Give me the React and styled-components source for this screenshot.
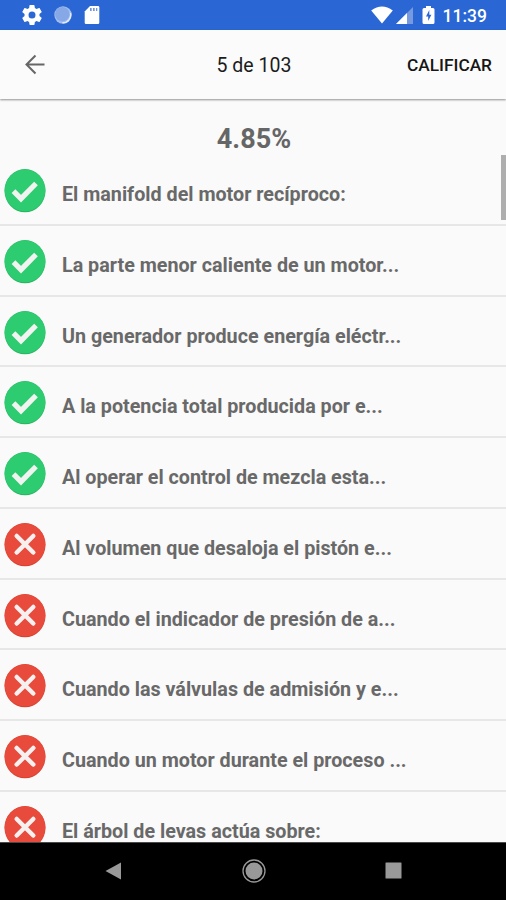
import React from 'react';
import styled, { createGlobalStyle } from 'styled-components';

const questions = [
    { text: 'El manifold del motor recíproco:', correct: true },
    { text: 'La parte menor caliente de un motor...', correct: true },
    { text: 'Un generador produce energía eléctr...', correct: true },
    { text: 'A la potencia total producida por e...', correct: true },
    { text: 'Al operar el control de mezcla esta...', correct: true },
    { text: 'Al volumen que desaloja el pistón e...', correct: false },
    { text: 'Cuando el indicador de presión de a...', correct: false },
    { text: 'Cuando las válvulas de admisión y e...', correct: false },
    { text: 'Cuando un motor durante el proceso ...', correct: false },
    { text: 'El árbol de levas actúa sobre:', correct: false },
];

const GlobalStyle = createGlobalStyle`
    body {
        margin: 0;
        background: #fafafa;
        font-family: Roboto, sans-serif;
    }
    * {
        box-sizing: border-box;
    }
`;

const Screen = styled.div`
    width: 506px;
    height: 900px;
    display: flex;
    flex-direction: column;
    overflow: hidden;
    background: #fafafa;
`;

const StatusBar = styled.div`
    flex: none;
    height: 30px;
    padding: 0 19px 0 22px;
    display: flex;
    align-items: center;
    justify-content: space-between;
    background: #2a66d4;
    color: white;
`;

const StatusGroup = styled.div`
    display: flex;
    align-items: center;
    gap: ${(props) => props.gap};
`;

const Clock = styled.span`
    margin: 2px 0 0 4px;
    font-size: 17.5px;
    font-weight: 500;
    line-height: 28px;
    white-space: nowrap;
`;

const Header = styled.header`
    flex: none;
    height: 69px;
    display: grid;
    grid-template-columns: 1fr auto 1fr;
    align-items: center;
    padding: 0 14px 0 24px;
    background: #fbfbfb;
    box-shadow: 0 1px 2px rgba(0, 0, 0, 0.42);
    z-index: 1;
`;

const BackButton = styled.button`
    width: 22px;
    height: 22px;
    padding: 0;
    border: 0;
    background: none;
    display: flex;
`;

const Counter = styled.h1`
    margin: 2px 8px 0 0;
    font-size: 19.5px;
    font-weight: 400;
    line-height: 24px;
    color: #1c1c1c;
`;

const GradeButton = styled.button`
    justify-self: end;
    padding: 0;
    border: 0;
    background: none;
    font-family: inherit;
    font-size: 17.3px;
    font-weight: 500;
    line-height: 24px;
    color: #161616;
`;

const Score = styled.div`
    flex: none;
    height: 55px;
    padding: 24px 0 0 2px;
    text-align: center;
    font-size: 27px;
    font-weight: 700;
    line-height: 32px;
    color: #666;
`;

const ListArea = styled.div`
    flex: 1;
    min-height: 0;
    position: relative;
    overflow: hidden;
`;

const Rows = styled.div`
    padding-top: 1px;
`;

const Row = styled.div`
    height: 70.75px;
    display: flex;
    align-items: flex-start;
    padding: 14px 0 0 4px;
    border-bottom: 2px solid #e7e7e7;
`;

const Question = styled.p`
    margin: 14px 0 0 16px;
    font-size: 19.73px;
    font-weight: 700;
    line-height: 24px;
    white-space: nowrap;
    color: #696969;
`;

const ScrollThumb = styled.div`
    position: absolute;
    top: 1px;
    right: 0;
    width: 5px;
    height: 65px;
    background: #aeaeae;
`;

const NavBar = styled.nav`
    flex: none;
    height: 58px;
    display: flex;
    align-items: center;
    justify-content: space-between;
    padding: 0 104px 2px 105px;
    background: #000;
    border-top: 1px solid #4a4a4a;
`;

const GearIcon = () => (
    <svg width="20" height="20" viewBox="2 2 20 20" fill="white">
        <path d="M19.43 12.98c.04-.32.07-.64.07-.98s-.03-.66-.07-.98l2.11-1.65c.19-.15.24-.42.12-.64l-2-3.46c-.12-.22-.39-.3-.61-.22l-2.49 1c-.52-.4-1.08-.73-1.69-.98l-.38-2.65A.49.49 0 0 0 14 2h-4c-.25 0-.46.18-.49.42l-.38 2.65c-.61.25-1.17.59-1.69.98l-2.49-1c-.23-.09-.49 0-.61.22l-2 3.46c-.13.22-.07.49.12.64l2.11 1.65c-.04.32-.07.65-.07.98s.03.66.07.98l-2.11 1.65c-.19.15-.24.42-.12.64l2 3.46c.12.22.39.3.61.22l2.49-1c.52.4 1.08.73 1.69.98l.38 2.65c.03.24.24.42.49.42h4c.25 0 .46-.18.49-.42l.38-2.65c.61-.25 1.17-.59 1.69-.98l2.49 1c.23.09.49 0 .61-.22l2-3.46c.12-.22.07-.49-.12-.64zM12 15.5a3.5 3.5 0 1 1 0-7 3.5 3.5 0 0 1 0 7z" />
    </svg>
);

const SyncIcon = () => (
    <svg width="18" height="18" viewBox="0 0 18 18">
        <circle cx="9" cy="9" r="8.7" fill="#a3bdee" />
        <circle cx="8.3" cy="8.2" r="7.2" fill="#86a8e6" />
        <path d="M16.5 7A8 8 0 0 1 8.5 16.8" fill="none" stroke="#e4ecfb" strokeWidth="1.4" />
    </svg>
);

const SdCardIcon = () => (
    <svg width="16" height="20" viewBox="0 0 16 20">
        <path d="M6 1h8q1.3 0 1.3 1.3v15.4q0 1.3-1.3 1.3H2q-1.3 0-1.3-1.3V6.5z" fill="white" />
        <path d="M6 3h1.7v3H6zM9 3h1.7v3H9zM12 3h1.3v3H12z" fill="#7397df" />
    </svg>
);

const WifiIcon = () => (
    <svg width="22" height="18" viewBox="0 0 22 18">
        <path d="M.2 4.5Q11-3.5 21.8 4.5L11 17.5z" fill="white" />
    </svg>
);

const SignalIcon = () => (
    <svg width="17" height="17" viewBox="0 0 17 17">
        <path d="M17 0v17H0z" fill="#7699df" />
        <path d="M11 6v11H0z" fill="white" />
    </svg>
);

const BatteryIcon = () => (
    <svg width="13" height="20" viewBox="0 0 13 20">
        <path d="M4 1h5v2h2q1.5 0 1.5 1.5v13q0 1.5-1.5 1.5H2Q.5 19 .5 17.5v-13Q.5 3 2 3h2z" fill="white" />
        <path d="M7.300 5L4 11.500h2.200V16l3.200-6.300H7.300z" fill="#2a66d4" />
    </svg>
);

const ArrowIcon = () => (
    <svg width="22" height="22" viewBox="0 0 22 22" fill="none" stroke="#666" strokeWidth="2">
        <path d="M20.5 10.5H3M11.5 1.5l-9 9 9 9" />
    </svg>
);

const StatusIcon = ({ correct }) => (
    <svg width="42" height="44" viewBox="0 0 42 44">
        <ellipse cx="21" cy="21.7" rx="20.5" ry="21.6" fill={correct ? '#27b562' : '#d8402f'} />
        <ellipse cx="21" cy="21.3" rx="20.3" ry="21" fill={correct ? '#2ecc71' : '#e84a3b'} />
        {correct ? (
            <path d="M9.5 22.2l7.5 7.5L32 14.5" fill="none" stroke="#f1f3f1" strokeWidth="5.2" />
        ) : (
            <path d="M12.7 13l16.6 16.5M29.3 13L12.7 29.5" fill="none" stroke="#f6f1f0" strokeWidth="4.5" strokeLinecap="round" />
        )}
    </svg>
);

const NavBackIcon = () => (
    <svg width="17" height="18" viewBox="0 0 17 18">
        <path d="M.5 9L16 .5v17z" fill="#999" />
    </svg>
);

const NavHomeIcon = () => (
    <svg width="24" height="24" viewBox="0 0 24 24">
        <circle cx="12" cy="12" r="11" fill="none" stroke="#999" strokeWidth="1.3" />
        <circle cx="12" cy="12" r="8.5" fill="#999" />
    </svg>
);

const NavRecentIcon = () => (
    <svg width="17" height="17" viewBox="0 0 17 17">
        <rect x=".5" y=".5" width="16" height="16" rx=".5" fill="#999" />
    </svg>
);

const App = () => {
    return (
        <Screen>
            <GlobalStyle />
            <StatusBar>
                <StatusGroup gap="12px">
                    <GearIcon />
                    <SyncIcon />
                    <SdCardIcon />
                </StatusGroup>
                <StatusGroup gap="9px">
                    <StatusGroup gap="3px">
                        <WifiIcon />
                        <SignalIcon />
                    </StatusGroup>
                    <StatusGroup gap="4px">
                        <BatteryIcon />
                        <Clock>11:39</Clock>
                    </StatusGroup>
                </StatusGroup>
            </StatusBar>
            <Header>
                <BackButton aria-label="Volver">
                    <ArrowIcon />
                </BackButton>
                <Counter>5 de 103</Counter>
                <GradeButton>CALIFICAR</GradeButton>
            </Header>
            <Score>4.85%</Score>
            <ListArea>
                <Rows>
                    {questions.map((question) => (
                        <Row key={question.text}>
                            <StatusIcon correct={question.correct} />
                            <Question>{question.text}</Question>
                        </Row>
                    ))}
                </Rows>
                <ScrollThumb />
            </ListArea>
            <NavBar>
                <NavBackIcon />
                <NavHomeIcon />
                <NavRecentIcon />
            </NavBar>
        </Screen>
    );
};

export default App;
